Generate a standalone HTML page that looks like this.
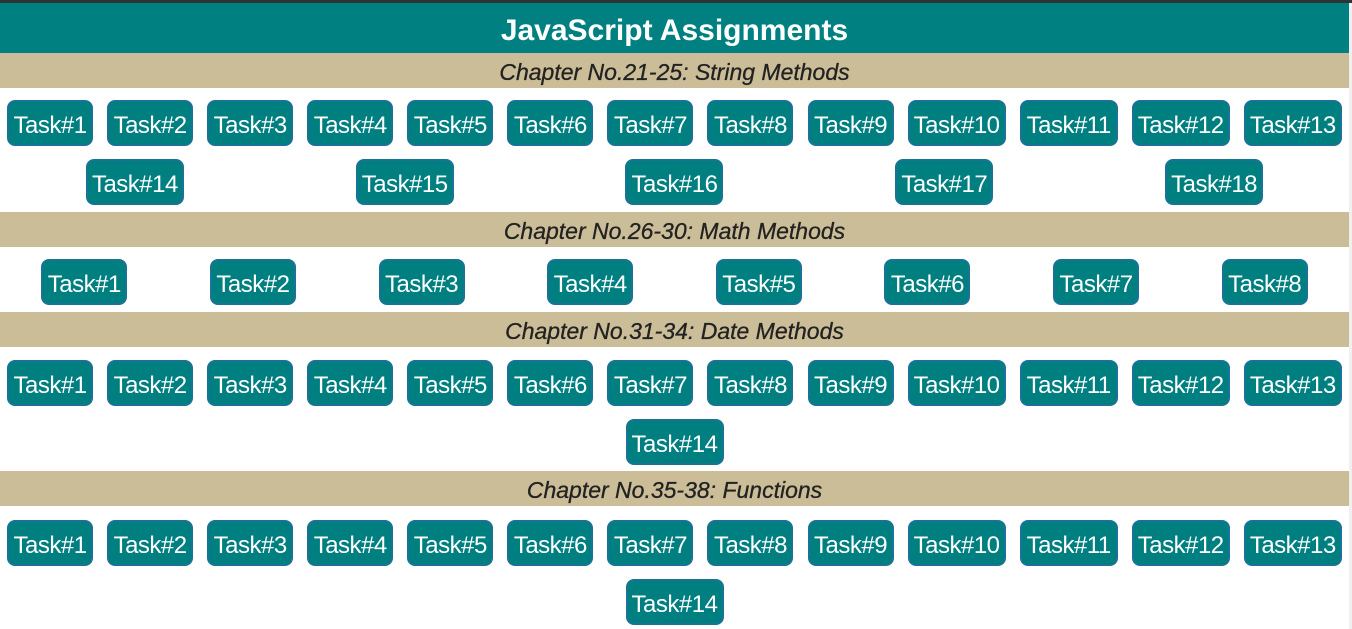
<!DOCTYPE html>
<html><head><meta charset="utf-8"><style>
*{margin:0;padding:0;box-sizing:border-box}
body{width:1352px;height:629px;background:#fff;position:relative;overflow:hidden;font-family:"Liberation Sans",sans-serif}
.top{position:absolute;left:0;top:0;width:1352px;height:3px;background:#2e3338}
.edge{position:absolute;right:0;top:3px;width:3px;height:626px;background:#f0f0f0}
.h{position:absolute;left:0;top:3px;width:1349px;height:50px;background:#008080;color:#fff;font-weight:bold;font-size:30px;text-align:center;line-height:55px}
.bar{position:absolute;left:0;width:1349px;height:35px;background:#cbbd97;color:#222;font-style:italic;font-size:23px;text-align:center;line-height:39px;-webkit-text-stroke:0.3px #222}
.row{position:absolute;left:0;width:1349px;height:46px;display:flex;justify-content:space-around}
.b{height:46px;width:86px;background:#007f80;border:2px solid #1a7396;border-radius:8px;color:#fff;font-size:24px;line-height:47px;text-align:center;letter-spacing:-0.5px;white-space:nowrap}
.w{width:98px}
</style></head><body>
<div class="top"></div><div class="edge"></div>
<div class="h">JavaScript Assignments</div>

<div class="bar" style="top:53px">Chapter No.21-25: String Methods</div>
<div class="row" style="top:100px"><div class="b">Task#1</div><div class="b">Task#2</div><div class="b">Task#3</div><div class="b">Task#4</div><div class="b">Task#5</div><div class="b">Task#6</div><div class="b">Task#7</div><div class="b">Task#8</div><div class="b">Task#9</div><div class="b w">Task#10</div><div class="b w">Task#11</div><div class="b w">Task#12</div><div class="b w">Task#13</div></div>
<div class="row" style="top:159px"><div class="b w">Task#14</div><div class="b w">Task#15</div><div class="b w">Task#16</div><div class="b w">Task#17</div><div class="b w">Task#18</div></div>

<div class="bar" style="top:212px">Chapter No.26-30: Math Methods</div>
<div class="row" style="top:259px"><div class="b">Task#1</div><div class="b">Task#2</div><div class="b">Task#3</div><div class="b">Task#4</div><div class="b">Task#5</div><div class="b">Task#6</div><div class="b">Task#7</div><div class="b">Task#8</div></div>

<div class="bar" style="top:312px">Chapter No.31-34: Date Methods</div>
<div class="row" style="top:360px"><div class="b">Task#1</div><div class="b">Task#2</div><div class="b">Task#3</div><div class="b">Task#4</div><div class="b">Task#5</div><div class="b">Task#6</div><div class="b">Task#7</div><div class="b">Task#8</div><div class="b">Task#9</div><div class="b w">Task#10</div><div class="b w">Task#11</div><div class="b w">Task#12</div><div class="b w">Task#13</div></div>
<div class="row" style="top:419px"><div class="b w">Task#14</div></div>

<div class="bar" style="top:471px">Chapter No.35-38: Functions</div>
<div class="row" style="top:520px"><div class="b">Task#1</div><div class="b">Task#2</div><div class="b">Task#3</div><div class="b">Task#4</div><div class="b">Task#5</div><div class="b">Task#6</div><div class="b">Task#7</div><div class="b">Task#8</div><div class="b">Task#9</div><div class="b w">Task#10</div><div class="b w">Task#11</div><div class="b w">Task#12</div><div class="b w">Task#13</div></div>
<div class="row" style="top:579px"><div class="b w">Task#14</div></div>
</body></html>
